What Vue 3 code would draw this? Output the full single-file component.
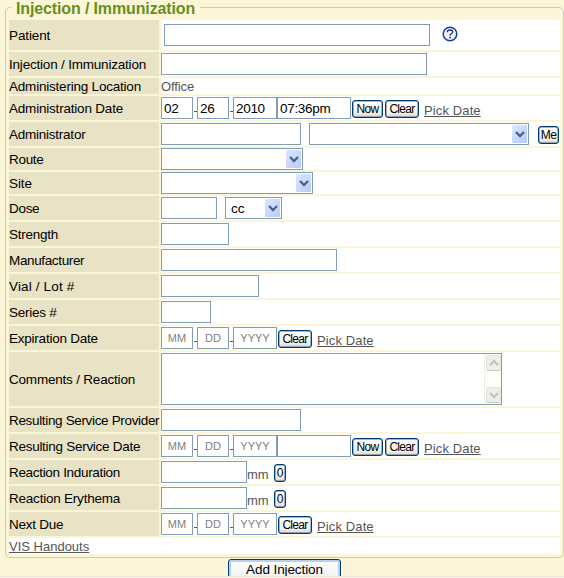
<script setup>
const rows = [
  { label: 'Patient', h: 30, kind: 'patient', ls: -0.12 },
  { label: 'Injection / Immunization', h: 24, kind: 'text', w: 266, ls: -0.2 },
  { label: 'Administering Location', h: 16, kind: 'office', ls: -0.21 },
  { label: 'Administration Date', h: 24, kind: 'date', m: '02', d: '26', y: '2010', time: '07:36pm', now: true, ls: -0.2 },
  { label: 'Administrator', h: 24, kind: 'admin', ls: -0.24 },
  { label: 'Route', h: 22, kind: 'select', w: 142, ls: -0.3 },
  { label: 'Site', h: 22, kind: 'select', w: 152, ls: -0.1 },
  { label: 'Dose', h: 24, kind: 'dose', ls: -0.3 },
  { label: 'Strength', h: 24, kind: 'text', w: 68, ls: -0.25 },
  { label: 'Manufacturer', h: 24, kind: 'text', w: 176, ls: -0.36 },
  { label: 'Vial / Lot #', h: 24, kind: 'text', w: 98, ls: 0.15 },
  { label: 'Series #', h: 24, kind: 'text', w: 50, ls: -0.25 },
  { label: 'Expiration Date', h: 24, kind: 'date', ls: -0.23 },
  { label: 'Comments / Reaction', h: 54, kind: 'area', ls: -0.2 },
  { label: 'Resulting Service Provider', h: 24, kind: 'text', w: 140, ls: -0.34 },
  { label: 'Resulting Service Date', h: 24, kind: 'date', now: true, time: '', ls: -0.28 },
  { label: 'Reaction Induration', h: 24, kind: 'mm', ls: -0.32 },
  { label: 'Reaction Erythema', h: 24, kind: 'mm', ls: -0.22 },
  { label: 'Next Due', h: 24, kind: 'date', ls: -0.25 },
]
</script>

<template>
  <main class="page">
    <section class="group">
      <h1 class="legend">Injection / Immunization</h1>
      <div class="rows">
        <div v-for="r in rows" :key="r.label" class="row" :style="{ height: r.h + 'px' }">
          <div class="label"><span :style="{ letterSpacing: r.ls + 'px' }">{{ r.label }}</span></div>
          <div class="value" :class="r.kind">
            <template v-if="r.kind === 'patient'">
              <input class="field" type="text" />
              <svg class="help" width="16" height="16" viewBox="0 0 16 16">
                <circle cx="8" cy="8" r="6.8" fill="#f0f4ff" stroke="#1c3da8" stroke-width="1.5" />
                <path d="M5.3 6.3 V5.5 Q5.8 4 8 4 Q10.7 4 10.7 5.9 Q10.7 7 9.2 7.8 Q8 8.4 8 9.7" fill="none" stroke="#252b5c" stroke-width="1.3" />
                <rect x="7.2" y="10.8" width="1.6" height="1.5" fill="#252b5c" />
              </svg>
            </template>
            <input v-else-if="r.kind === 'text'" class="field" type="text" :style="{ width: r.w + 'px' }" />
            <span v-else-if="r.kind === 'office'" class="plain office-text">Office</span>
            <template v-else-if="r.kind === 'date'">
              <input class="field two" :value="r.m" placeholder="MM" /><i class="dash"></i>
              <input class="field two" :value="r.d" placeholder="DD" /><i class="dash"></i>
              <input class="field four" :value="r.y" placeholder="YYYY" />
              <input v-if="r.now" class="field time" :value="r.time" />
              <button v-if="r.now" class="btn now">Now</button>
              <button class="btn clear" :class="{ second: r.now }">Clear</button>
              <a class="link pick">Pick Date</a>
            </template>
            <template v-else-if="r.kind === 'admin'">
              <input class="field name" type="text" />
              <div class="field drop wide"><b class="arrow"><svg width="10" height="8" viewBox="0 0 10 8"><path d="M1 2 L5 6 L9 2" /></svg></b></div>
              <button class="btn me">Me</button>
            </template>
            <div v-else-if="r.kind === 'select'" class="field drop" :style="{ width: r.w + 'px' }"><b class="arrow"><svg width="10" height="8" viewBox="0 0 10 8"><path d="M1 2 L5 6 L9 2" /></svg></b></div>
            <template v-else-if="r.kind === 'dose'">
              <input class="field amount" type="text" />
              <div class="field drop unit"><span>cc</span><b class="arrow"><svg width="10" height="8" viewBox="0 0 10 8"><path d="M1 2 L5 6 L9 2" /></svg></b></div>
            </template>
            <div v-else-if="r.kind === 'area'" class="field textarea">
              <div class="scroll">
                <b><svg width="10" height="8" viewBox="0 0 10 8"><path d="M1 6 L5 2 L9 6" /></svg></b>
                <b><svg width="10" height="8" viewBox="0 0 10 8"><path d="M1 2 L5 6 L9 2" /></svg></b>
              </div>
            </div>
            <template v-else>
              <input class="field size" type="text" />
              <span class="plain unit-text">mm</span>
              <button class="btn zero">0</button>
            </template>
          </div>
        </div>
        <div class="handouts"><a class="link">VIS Handouts</a></div>
      </div>
    </section>
    <div class="footer"><button class="submit">Add Injection</button></div>
  </main>
</template>

<style>
body { margin: 0; background: #fcf6d9; overflow: hidden; }
</style>

<style scoped>
* { box-sizing: border-box; }
.page { width: 564px; height: 578px; overflow: hidden; background: #fcf6d9; font: 13px/16px "Liberation Sans", Arial, sans-serif; color: #000; padding: 7px 0 0 5px; }
.group { width: 559px; height: 551px; border: 1px solid #cfcab5; border-radius: 5px; }
.legend { width: max-content; margin: -9px 0 0 5px; padding: 0 5px; height: 20px; background: #fcf6d9; color: #668f20; font-size: 16px; line-height: 20px; font-weight: bold; white-space: nowrap; letter-spacing: -0.13px; }
.rows { display: flex; flex-direction: column; gap: 2px; padding: 1px 3px 0; width: 557px; }
.row { display: flex; gap: 2px; width: 551px; }
.label { width: 150px; background: #e8e3c5; display: flex; align-items: center; white-space: nowrap; flex: none; font-size: 13.5px; padding-top: 1px; }
.value { flex: 1; background: #fff; display: flex; align-items: center; min-width: 0; }
.field { display: block; flex: none; margin: 0; height: 22px; border: 1px solid #7f9db9; border-radius: 0; background: #fff; padding: 0 2px; font: 13.5px/20px "Liberation Sans", Arial, sans-serif; letter-spacing: -0.3px; color: #000; outline: 0; }
.patient .field { width: 266px; margin-left: 3px; }
.help { margin: -3px 0 0 11.5px; }
.plain { color: #555; }
.office-text { padding-top: 1px; letter-spacing: -0.1px; }
.two { width: 32px; }
.four { width: 44px; }
.time { width: 74px; }
.field:placeholder-shown { padding-bottom: 2px; }
.field::placeholder { color: #808080; opacity: 1; font-size: 11px; letter-spacing: 0; text-align: center; }
.dash { width: 3px; height: 1px; background: #555; margin: 6px 0 0 1px; flex: none; }
.btn { flex: none; height: 18px; padding: 0; margin: 2px 0 0 1px; border: 1px solid #003c74; border-radius: 3px; background: linear-gradient(#fff, #f3f2ed 75%, #d8d3c7); color: #000; font: 12px/15px "Liberation Sans", Arial, sans-serif; letter-spacing: -0.7px; text-align: center; box-shadow: inset 0 0 0 0.5px #49719a; }
.now { width: 31px; }
.clear { width: 34px; }
.clear.second { margin-left: 2px; }
.link { color: #555; text-decoration: underline; white-space: nowrap; }
.pick { margin: 5px 0 0 5px; letter-spacing: 0.12px; }
.name { width: 140px; }
.drop { display: flex; align-items: center; justify-content: flex-end; padding: 1px; }
.drop span { flex: 1; padding: 2px 0 0 4px; letter-spacing: 0; }
.wide { width: 220px; margin-left: 8px; }
.me { width: 21px; margin: 2px 0 0 9px; }
.arrow { width: 15px; height: 18px; border-radius: 1px; background: linear-gradient(135deg, #dce7ff, #b5cbfb); display: flex; align-items: center; justify-content: center; flex: none; }
.arrow path { fill: none; stroke: #4d6185; stroke-width: 2.3; }
.amount { width: 56px; }
.unit { width: 57px; margin-left: 8px; }
.textarea { width: 341px; height: 52px; padding: 0; display: flex; justify-content: flex-end; }
.scroll { width: 17px; height: 50px; padding: 1px; background: #fdfdf9; border-left: 1px solid #eeede5; display: flex; flex-direction: column; justify-content: space-between; }
.scroll b { width: 15px; height: 16px; display: flex; align-items: center; justify-content: center; background: #efeee9; border: 1px solid #e5e3da; border-bottom-color: #cbc7b8; border-radius: 2px; }
.scroll path { fill: none; stroke: #c5c3ba; stroke-width: 2.3; }
.size { width: 86px; }
.unit-text { margin-top: 5px; width: 22px; }
.zero { width: 12px; margin-left: 5px; letter-spacing: 0; }
.handouts { height: 16px; width: 551px; background: #fff; }
.handouts .link { display: block; line-height: 17px; width: max-content; }
.footer { height: 18px; margin: 1px 0 0 -5px; border-bottom: 1px solid #ebe7dc; overflow: hidden; display: flex; }
.submit { width: 113px; height: 22px; flex: none; margin-left: 228px; padding: 0 0 1px; border: 1px solid #003c74; border-radius: 3px; background: linear-gradient(#fff, #f0efea); box-shadow: inset 0 0 0 2px #b9cff2; color: #000; font: 13.5px/18px "Liberation Sans", Arial, sans-serif; letter-spacing: -0.1px; }
</style>
